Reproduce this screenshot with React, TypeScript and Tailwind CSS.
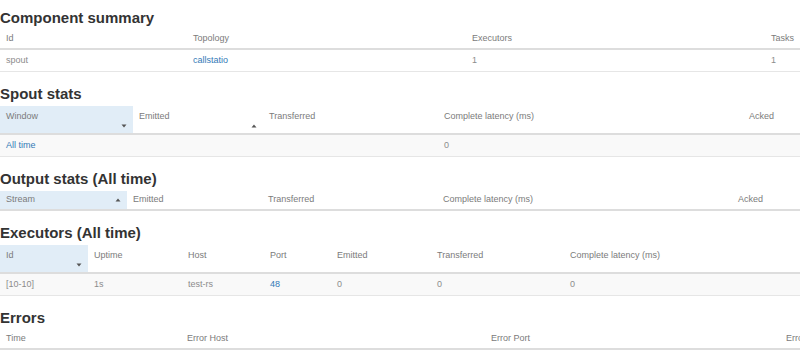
import React from 'react'

type Col = { label: string; w: number; icon?: 'up' | 'down'; active?: boolean }

const font = { fontFamily: '"Liberation Sans", Arial, sans-serif' }

function SortIcon({ dir }: { dir: 'up' | 'down' }) {
  return (
    <svg width="6" height="4" viewBox="0 0 6 4" className="block">
      {dir === 'up' ? <polygon points="0.5,3.5 5.5,3.5 3,0.5" fill="#555" /> : <polygon points="0.5,0.5 5.5,0.5 3,3.5" fill="#555" />}
    </svg>
  )
}

function HeaderRow({ cols, tall }: { cols: Col[]; tall?: boolean }) {
  return (
    <div className="flex border-b-2 border-[#dddddd]">
      {cols.map(c => (
        <div
          key={c.label}
          className={`relative shrink-0 pl-[6px] pr-[6px] text-[9px] text-[#7b7b7b] ${tall ? 'h-[27px] pt-[2px]' : 'h-[18px]'} ${c.active ? 'bg-[#e1edf7]' : ''}`}
          style={{ width: c.w }}
        >
          <div className="flex h-[18px] items-center justify-between">
            <span className="whitespace-nowrap">{c.label}</span>
            {!tall && c.icon && <SortIcon dir={c.icon} />}
          </div>
          {tall && c.icon && (
            <div className="absolute right-[6px] bottom-[5px]">
              <SortIcon dir={c.icon} />
            </div>
          )}
        </div>
      ))}
    </div>
  )
}

function DataRow({ cells, widths, striped, links = [] }: { cells: string[]; widths: number[]; striped?: boolean; links?: number[] }) {
  return (
    <div className={`flex h-[22px] border-b border-[#e6e6e6] ${striped ? 'bg-[#f9f9f9]' : 'bg-white'}`}>
      {widths.map((w, i) => (
        <div
          key={i}
          className={`flex shrink-0 items-center px-[6px] text-[9px] whitespace-nowrap ${links.includes(i) ? 'text-[#337ab7]' : 'text-[#8c8c8c]'}`}
          style={{ width: w }}
        >
          {cells[i] ?? ''}
        </div>
      ))}
    </div>
  )
}

function Heading({ children }: { children: React.ReactNode }) {
  return <h2 className="pt-[9px] pb-[4px] text-[15px] leading-[17px] font-bold text-[#333333]">{children}</h2>
}

const summaryCols: Col[] = [
  { label: 'Id', w: 187 },
  { label: 'Topology', w: 279 },
  { label: 'Executors', w: 299 },
  { label: 'Tasks', w: 80 },
]

const spoutCols: Col[] = [
  { label: 'Window', w: 133, icon: 'down', active: true },
  { label: 'Emitted', w: 130, icon: 'up' },
  { label: 'Transferred', w: 175 },
  { label: 'Complete latency (ms)', w: 305 },
  { label: 'Acked', w: 80 },
]

const outputCols: Col[] = [
  { label: 'Stream', w: 127, icon: 'up', active: true },
  { label: 'Emitted', w: 135 },
  { label: 'Transferred', w: 175 },
  { label: 'Complete latency (ms)', w: 295 },
  { label: 'Acked', w: 80 },
]

const execCols: Col[] = [
  { label: 'Id', w: 88, icon: 'down', active: true },
  { label: 'Uptime', w: 94 },
  { label: 'Host', w: 82 },
  { label: 'Port', w: 67 },
  { label: 'Emitted', w: 100 },
  { label: 'Transferred', w: 133 },
  { label: 'Complete latency (ms)', w: 250 },
]

const errorCols: Col[] = [
  { label: 'Time', w: 181 },
  { label: 'Error Host', w: 304 },
  { label: 'Error Port', w: 295 },
  { label: 'Error', w: 80 },
]

export default function App() {
  return (
    <div className="h-[358px] w-[800px] overflow-hidden bg-white" style={font}>
      <section className="w-[1000px]">
        <Heading>Component summary</Heading>
        <HeaderRow cols={summaryCols} />
        <DataRow cells={['spout', 'callstatio', '1', '1']} widths={summaryCols.map(c => c.w)} links={[1]} />
      </section>

      <section className="mt-[4px] w-[1000px]">
        <Heading>Spout stats</Heading>
        <HeaderRow cols={spoutCols} tall />
        <DataRow cells={['All time', '', '', '0', '']} widths={spoutCols.map(c => c.w)} striped links={[0]} />
      </section>

      <section className="mt-[4px] w-[1000px]">
        <Heading>Output stats (All time)</Heading>
        <HeaderRow cols={outputCols} />
      </section>

      <section className="mt-[4px] w-[1000px]">
        <Heading>Executors (All time)</Heading>
        <HeaderRow cols={execCols} tall />
        <DataRow
          cells={['[10-10]', '1s', 'test-rs', '48', '0', '0', '0']}
          widths={execCols.map(c => c.w)}
          striped
          links={[3]}
        />
      </section>

      <section className="mt-[4px] w-[1000px]">
        <Heading>Errors</Heading>
        <HeaderRow cols={errorCols} />
      </section>
    </div>
  )
}
